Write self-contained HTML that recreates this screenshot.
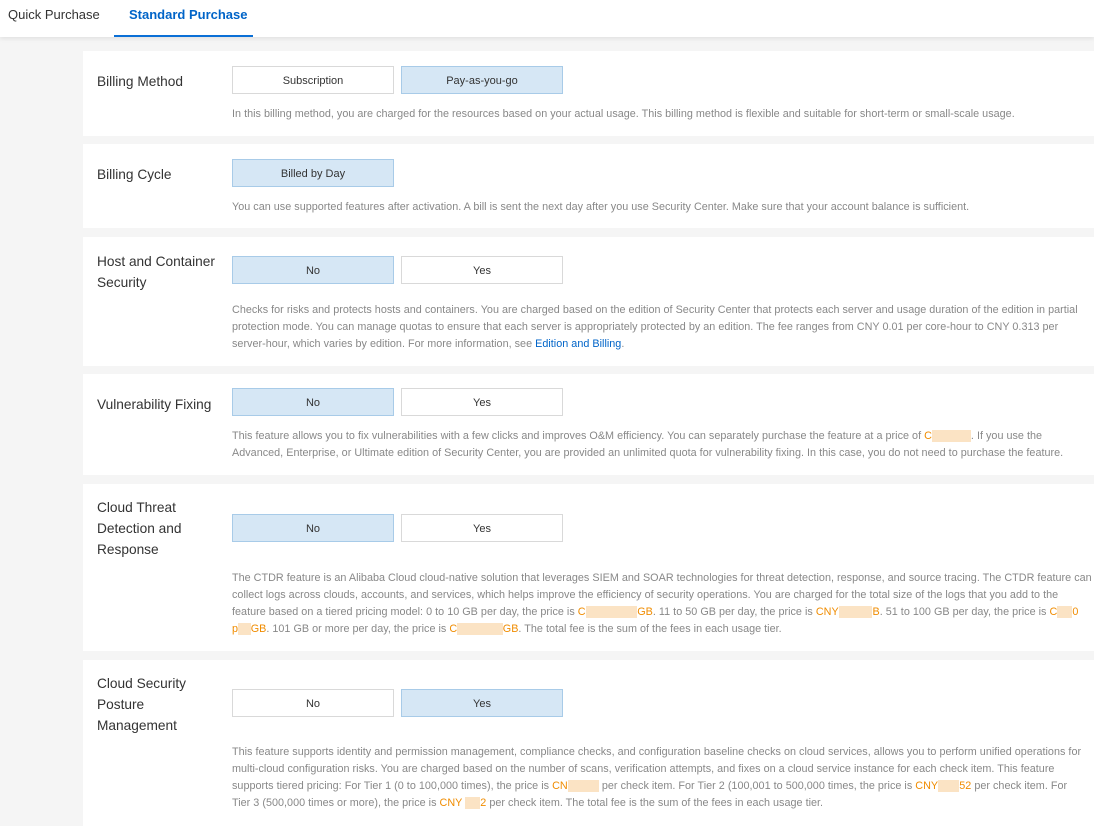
<!DOCTYPE html>
<html><head><meta charset="utf-8"><style>
*{margin:0;padding:0;box-sizing:border-box}
body{width:1094px;height:826px;overflow:hidden;background:#f5f5f5;font-family:"Liberation Sans",sans-serif;position:relative}
.hdr{position:absolute;left:0;top:0;width:1094px;height:37px;background:#fff;box-shadow:0 2px 4px rgba(0,0,0,.08)}
.tab{position:absolute;top:7px;font-size:13px;color:#333}
.tab.on{color:#0064c8;font-weight:bold}
.ul{position:absolute;left:114px;top:35px;width:139px;height:2px;background:#0a6fd6}
.card{position:absolute;left:83px;width:1011px;background:#fff}
.lbl{position:absolute;left:14px;font-size:13.7px;color:#333;line-height:21px}
.btn{position:absolute;width:162px;height:28px;border:1px solid #d9d9d9;background:#fff;font-size:11px;color:#333;text-align:center;line-height:29px}
.btn.on{background:#d6e7f5;border-color:#a8cbe8}
.d{position:absolute;left:149px;font-size:10.8px;color:#888;line-height:17px;white-space:nowrap;letter-spacing:0.02px}
.o{color:#f08c00}
.r{background:#fbe3c4;color:#fbe3c4}
a{color:#0064c8;text-decoration:none}
</style></head><body>
<div class="hdr"><span class="tab" style="left:8px">Quick Purchase</span><span class="tab on" style="left:129px">Standard Purchase</span><div class="ul"></div></div>

<div class="card" style="top:51px;height:85px">
<div class="lbl" style="top:20px">Billing Method</div>
<div class="btn" style="left:149px;top:15px">Subscription</div>
<div class="btn on" style="left:318px;top:15px">Pay-as-you-go</div>
<div class="d" style="top:55px">In this billing method, you are charged for the resources based on your actual usage. This billing method is flexible and suitable for short-term or small-scale usage.</div>
</div>

<div class="card" style="top:144px;height:84px">
<div class="lbl" style="top:20px">Billing Cycle</div>
<div class="btn on" style="left:149px;top:15px">Billed by Day</div>
<div class="d" style="top:55px">You can use supported features after activation. A bill is sent the next day after you use Security Center. Make sure that your account balance is sufficient.</div>
</div>

<div class="card" style="top:237px;height:129px">
<div class="lbl" style="top:14px">Host and Container<br>Security</div>
<div class="btn on" style="left:149px;top:19px">No</div>
<div class="btn" style="left:318px;top:19px">Yes</div>
<div class="d" style="top:65px">Checks for risks and protects hosts and containers. You are charged based on the edition of Security Center that protects each server and usage duration of the edition in partial<br>protection mode. You can manage quotas to ensure that each server is appropriately protected by an edition. The fee ranges from CNY 0.01 per core-hour to CNY 0.313 per<br>server-hour, which varies by edition. For more information, see <a>Edition and Billing</a>.</div>
</div>

<div class="card" style="top:374px;height:101px">
<div class="lbl" style="top:20px">Vulnerability Fixing</div>
<div class="btn on" style="left:149px;top:14px">No</div>
<div class="btn" style="left:318px;top:14px">Yes</div>
<div class="d" style="top:54px">This feature allows you to fix vulnerabilities with a few clicks and improves O&amp;M efficiency. You can separately purchase the feature at a price of <span class="o">C</span><span class="r">NY 0.00</span>. If you use the<br>Advanced, Enterprise, or Ultimate edition of Security Center, you are provided an unlimited quota for vulnerability fixing. In this case, you do not need to purchase the feature.</div>
</div>

<div class="card" style="top:484px;height:167px">
<div class="lbl" style="top:13px">Cloud Threat<br>Detection and<br>Response</div>
<div class="btn on" style="left:149px;top:30px">No</div>
<div class="btn" style="left:318px;top:30px">Yes</div>
<div class="d" style="top:86px">The CTDR feature is an Alibaba Cloud cloud-native solution that leverages SIEM and SOAR technologies for threat detection, response, and source tracing. The CTDR feature can<br>collect logs across clouds, accounts, and services, which helps improve the efficiency of security operations. You are charged for the total size of the logs that you add to the<br>feature based on a tiered pricing model: 0 to 10 GB per day, the price is <span class="o">C</span><span class="r">NY 0.0 per</span><span class="o">GB</span>. 11 to 50 GB per day, the price is <span class="o">CNY</span><span class="r">0.0 per</span><span class="o">B</span>. 51 to 100 GB per day, the price is <span class="o">C</span><span class="r">NY</span><span class="o">0</span><br><span class="o">p</span><span class="r">er </span><span class="o">GB</span>. 101 GB or more per day, the price is <span class="o">C</span><span class="r">NY 0. per</span><span class="o">GB</span>. The total fee is the sum of the fees in each usage tier.</div>
</div>

<div class="card" style="top:660px;height:166px">
<div class="lbl" style="top:13px">Cloud Security<br>Posture<br>Management</div>
<div class="btn" style="left:149px;top:29px">No</div>
<div class="btn on" style="left:318px;top:29px">Yes</div>
<div class="d" style="top:84px">This feature supports identity and permission management, compliance checks, and configuration baseline checks on cloud services, allows you to perform unified operations for<br>multi-cloud configuration risks. You are charged based on the number of scans, verification attempts, and fixes on a cloud service instance for each check item. This feature<br>supports tiered pricing: For Tier 1 (0 to 100,000 times), the price is <span class="o">CN</span><span class="r">Y 0.00</span> per check item. For Tier 2 (100,001 to 500,000 times, the price is <span class="o">CNY</span><span class="r">0.00</span><span class="o">52</span> per check item. For<br>Tier 3 (500,000 times or more), the price is <span class="o">CNY </span><span class="r">0.0</span><span class="o">2</span> per check item. The total fee is the sum of the fees in each usage tier.</div>
</div>
</body></html>
